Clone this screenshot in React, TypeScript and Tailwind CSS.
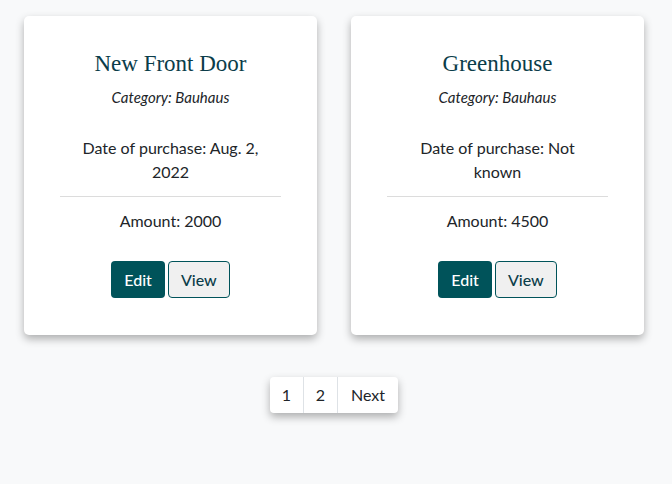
const items = [
  { title: 'New Front Door', category: 'Bauhaus', date: 'Aug. 2, 2022', amount: 2000 },
  { title: 'Greenhouse', category: 'Bauhaus', date: 'Not known', amount: 4500 },
];

function Card({ item }: { item: (typeof items)[number] }) {
  return (
    <div className="w-[293px] h-[319px] bg-white rounded-[5px] shadow-[0_4px_8px_rgba(0,0,0,0.3)] px-9 pt-[35px] text-center text-[#212529]">
      <h2 className="font-['Liberation_Serif',serif] text-[23px] leading-[26px] text-[#0b3d4a]">
        {item.title}
      </h2>
      <p className="mt-[10px] text-[15px] leading-5 italic">Category: {item.category}</p>
      <p className="mt-[29px] text-base leading-6 px-2">Date of purchase: {item.date}</p>
      <hr className="mt-[12px] border-t border-[#dcdcdc]" />
      <p className="mt-[12px] text-base leading-6">Amount: {item.amount}</p>
      <div className="mt-[28px] flex justify-center gap-[3px]">
        <button className="h-[37px] px-[13px] rounded-[4px] bg-[#00535a] text-white text-base font-medium">Edit</button>
        <button className="h-[37px] px-[12px] rounded-[4px] bg-[#f0f0f0] border border-[#00535a] text-[#0b3d4a] text-base font-medium">
          View
        </button>
      </div>
    </div>
  );
}

export default function App() {
  return (
    <div className="min-h-[484px] bg-[#f8f9fa] font-['Lato',sans-serif] pt-4">
      <div className="flex gap-[34px] pl-6">
        {items.map((item) => (
          <Card key={item.title} item={item} />
        ))}
      </div>
      <div className="mt-[42px] flex justify-center">
        <div className="flex h-9 bg-white rounded-[4px] shadow-[0_4px_8px_rgba(0,0,0,0.3)] text-base text-[#212529] ml-[-4px]">
          <span className="w-[34px] flex items-center justify-center border-r border-[#dee2e6]">1</span>
          <span className="w-[34px] flex items-center justify-center border-r border-[#dee2e6]">2</span>
          <span className="w-[60px] flex items-center justify-center">Next</span>
        </div>
      </div>
    </div>
  );
}
